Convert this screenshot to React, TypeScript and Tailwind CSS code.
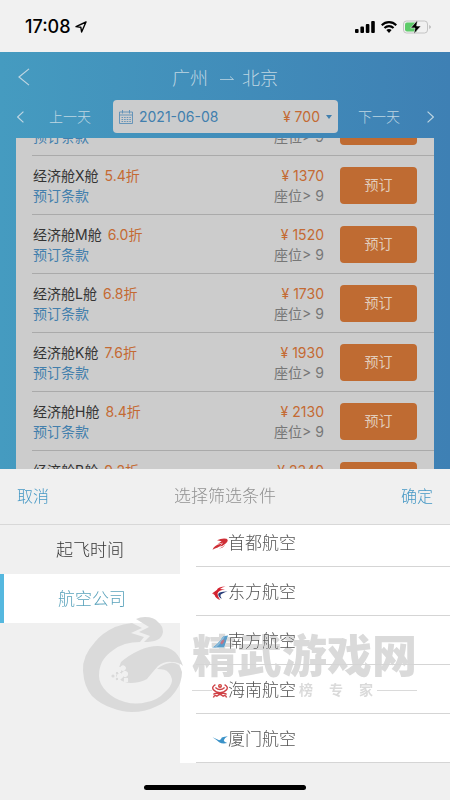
import React from "react";

interface Fare {
  cabin: string;
  discount: string;
  price: number;
}

interface Airline {
  id: string;
  name: string;
  logo: React.ReactNode;
}

const fares: Fare[] = [
  { cabin: "V", discount: "5.0", price: 1270 },
  { cabin: "X", discount: "5.4", price: 1370 },
  { cabin: "M", discount: "6.0", price: 1520 },
  { cabin: "L", discount: "6.8", price: 1730 },
  { cabin: "K", discount: "7.6", price: 1930 },
  { cabin: "H", discount: "8.4", price: 2130 },
  { cabin: "B", discount: "9.2", price: 2340 },
];

const airlines: Airline[] = [
  {
    id: "jd",
    name: "首都航空",
    logo: (
      <g fill="#cf2f36">
        <path d="M5 4.2Q10 2 14.5 2.8Q17.4 4.4 13.4 7.8Q10.5 10.6 7.2 10.6Q10.6 8.4 10.8 6.8Q8 7 5.5 8.4Q8 6 9.6 5.2Q7.5 4.6 5 4.2Z" />
        <path d="M0.5 13.8Q2.5 9.2 8 8.1L10.4 7Q8.4 10.4 5.8 11.4Q2.8 12.2 0.5 13.8Z" />
        <path d="M6 12.6Q10 12.2 13 8.5Q11.5 12.6 6 12.6Z" />
      </g>
    ),
  },
  {
    id: "mu",
    name: "东方航空",
    logo: (
      <>
        <path fill="#d3222f" d="M13.5 1.4Q6 1.5 4.8 5L0 8.4L3.6 8.9Q4 12 7.8 14.4Q5.5 11.6 5.5 8.6Q6.5 5 13 4.6Q9.5 4 8 4Q10 2 13.5 1.4Z" />
        <path fill="#d3222f" d="M0.5 8.5L4.5 8.5Q4.6 12 8.4 15Q3.6 13.6 2.6 10Z" />
        <path fill="#273c78" d="M15.5 6.4Q7 6.2 6.2 9Q6.2 12.2 9.8 13.8Q7.8 11.2 8.6 9.8Q10 8 15.5 6.4Z" />
      </>
    ),
  },
  {
    id: "cz",
    name: "南方航空",
    logo: (
      <>
        <path fill="#5b9dca" d="M0 13.5Q6 10.5 11 2.2L16 1.6L12.2 13.5Z" />
        <path fill="#8fbbd8" d="M6 9.5L11.2 2.2L13 2Q10 9 4 13.5L2 13.5Z" />
        <path fill="#c07486" d="M8.3 9Q9.3 5.8 12.3 5.2Q12.6 8.6 9.6 10.6Z" />
      </>
    ),
  },
  {
    id: "hu",
    name: "海南航空",
    logo: (
      <>
        <path fill="none" stroke="#cf4045" strokeWidth="1.4" d="M3.4 1.6Q-0.6 4 1.4 6.8Q4 9.6 8 9.6Q12 9.6 14.6 6.8Q16.6 4 12.6 1.6M3.4 4.4Q8 8.8 12.6 4.4M1.4 14.4Q2.6 11.4 5 13.2Q7.8 12 8 9.6Q8.2 12 11 13.2Q13.4 11.4 14.6 14.4M1.4 11.4Q5 9 8 11.6Q11 9 14.6 11.4" />
        <circle cx="8" cy="3" r="2" fill="#cf4045" />
        <circle cx="8" cy="2.8" r="0.7" fill="#f7d38b" />
      </>
    ),
  },
  {
    id: "mf",
    name: "厦门航空",
    logo: (
      <path fill="#3b92c8" d="M0.5 5.2Q4 6.6 7.2 8.2Q9.2 7.6 9.8 5.6Q12.5 4.4 15.8 4.2Q12.5 5.6 11.8 8.2Q11.7 9.6 15.2 11Q10.5 12.2 7.2 10.2Q4.8 8 0.5 5.2Z" />
    ),
  },
];

const StatusBar: React.FC = () => (
  <div className="flex h-[52px] shrink-0 items-center justify-between bg-[#f1f1f1] pl-[25px] pr-[19px] pt-0.5 text-black">
    <div className="flex items-center gap-1">
      <span className="font-[Inter,sans-serif] text-lg font-medium leading-5">17:08</span>
      <svg className="size-3" viewBox="0 0 12 12" fill="none" stroke="currentColor" strokeWidth="1.4" strokeLinejoin="round">
        <path d="M11 1L1 5.6L5.8 6.2L6.6 11Z" />
      </svg>
    </div>
    <div className="flex items-center gap-1.5">
      <svg className="h-3 w-5" viewBox="0 0 20 12">
        <rect x="0" y="8" width="3.6" height="4" rx="1" />
        <rect x="5.4" y="5.6" width="3.6" height="6.4" rx="1" />
        <rect x="10.8" y="3" width="3.6" height="9" rx="1" />
        <rect x="16.2" y="0" width="3.6" height="12" rx="1" />
      </svg>
      <svg className="h-3 w-4" viewBox="0 0 16 12">
        <path d="M8 0Q12.6 0 16 3.4L14.5 5Q11.8 2.3 8 2.3Q4.2 2.3 1.5 5L0 3.4Q3.4 0 8 0Z" />
        <path d="M8 4Q11 4 13.3 6.2L11.8 7.8Q10.2 6.2 8 6.2Q5.8 6.2 4.2 7.8L2.7 6.2Q5 4 8 4Z" />
        <path d="M8 8Q9.5 8 10.6 9.1L8 12L5.4 9.1Q6.5 8 8 8Z" />
      </svg>
      <svg className="h-3.5 w-7" viewBox="0 0 28 14">
        <rect x="0.5" y="1" width="24" height="12" rx="3" fill="none" stroke="#c4c4c4" />
        <path fill="#5dcb69" d="M4 2.5H14V11.5H4Q2 11.5 2 9.5V4.5Q2 2.5 4 2.5Z" />
        <path fill="#b0b0b0" d="M26.3 5Q27.8 6 27.8 7T26.3 9Z" />
        <path fill="#000" stroke="#f1f1f1" strokeWidth="0.6" d="M14.6 0L7.6 8H12L10.8 14L18 6H13.6Z" />
      </svg>
    </div>
  </div>
);

const Chevron: React.FC<{ className: string; right?: boolean }> = ({ className, right }) => (
  <svg className={className} viewBox="0 0 12 20" fill="none" stroke="#bfd6e2" strokeWidth="1.2" preserveAspectRatio="none">
    <path vectorEffect="non-scaling-stroke" d={right ? "M1 1L11 10L1 19" : "M11 1L1 10L11 19"} />
  </svg>
);

const FlightHeader: React.FC = () => (
  <header className="shrink-0 text-[#bfd6e2]">
    <div className="relative flex h-12 items-center justify-center pt-1.5 text-lg">
      <button type="button" aria-label="返回" className="absolute left-[18px] top-4">
        <Chevron className="h-[18px] w-3" />
      </button>
      <span>广州</span>
      <svg className="ml-3 mr-2 h-2 w-3.5" viewBox="0 0 14 8" fill="none" stroke="currentColor" strokeWidth="0.8">
        <path d="M0 4.5H13.5L10 1.5" />
      </svg>
      <span>北京</span>
    </div>
    <div className="flex h-[33px] items-center text-sm">
      <button type="button" className="flex flex-1 items-center gap-[25px] pl-[17px]">
        <Chevron className="h-3 w-[7px]" />
        上一天
      </button>
      <button
        type="button"
        className="flex h-full w-1/2 items-center rounded bg-[#cbcccd] px-1.5 font-[Inter,'Noto_Sans_CJK_SC',sans-serif] font-normal text-[#417fae]"
      >
        <svg className="mr-1.5 size-3.5" viewBox="0 0 14 14" fill="none" stroke="#5b8fb7" strokeWidth="0.9">
          <path d="M0.5 2H13.5V13.5H0.5ZM0.5 5H13.5M3.5 0V3.5M10.5 0V3.5" />
          <path strokeDasharray="1.6 1" d="M2.5 7.5H12M2.5 9.5H12M2.5 11.5H12" />
        </svg>
        <span>2021-06-08</span>
        <span className="ml-auto text-[#c46a33]">¥ 700</span>
        <svg className="ml-1.5 h-1 w-1.5" viewBox="0 0 6 4" fill="#417fae">
          <path d="M0 0H6L3 4Z" />
        </svg>
      </button>
      <button type="button" className="flex flex-1 items-center justify-end gap-[27px] pr-4">
        下一天
        <Chevron className="h-3 w-[7px]" right />
      </button>
    </div>
  </header>
);

const FareRow: React.FC<{ fare: Fare }> = ({ fare }) => (
  <li className="ml-4 flex h-[59px] shrink-0 items-center border-b border-[#aaaaaa] pl-px pr-[17px] pt-px text-sm font-normal leading-5">
    <div className="flex-1">
      <div className="flex gap-1.5 text-[#333333]">
        <span>经济舱{fare.cabin}舱</span>
        <span className="text-[#c46a33]">{fare.discount}折</span>
      </div>
      <a href="#terms" className="block text-[#437fac]">
        预订条款
      </a>
    </div>
    <div className="mr-4 flex flex-col items-end">
      <div className="flex gap-1 text-[#c46a33]">
        <span>¥</span>
        <span>{fare.price}</span>
      </div>
      <div className="text-[#777777]">座位&gt; 9</div>
    </div>
    <button type="button" className="h-[37px] w-[77px] rounded bg-[#bf6b32] pb-0.5 text-[#e2cdbb]">
      预订
    </button>
  </li>
);

const Watermark: React.FC = () => (
  <div
    aria-hidden="true"
    className="pointer-events-none absolute left-[82px] top-[147px] flex gap-2 text-[#dadada] mix-blend-darken"
  >
    <svg className="h-[98px] w-[102px]" viewBox="0 0 102 98" fill="currentColor">
      <path d="M50 7Q41 8 33 11Q20 17 13 26Q0 40 1 55Q2 71 10 80Q18 88 30 92Q40 96 50 96Q63 96 73 91Q86 86 93 76Q100 67 100 56Q99 52 97 49Q92 46 88 47Q81 48 75 53Q84 53 86 56Q90 60 90 65Q89 71 83 76Q76 84 65 86Q54 89 43 86Q32 83 25 76Q17 68 17 60Q17 52 20 46Q24 39 30 35Q36 30 43 28Q50 26 58 26L62 21L49 17L60 12Z" />
      <path d="M54 3Q58 1 63 1Q72 1 76 6Q81 10 81 16Q80 22 75 24Q70 26 62 26L68 20L57 16L67 11Z" />
      <path d="M101 50Q98 41 93 36Q86 30 76 30Q67 30 58 34Q47 39 39 46L34 60Q40 67 48 67Q58 67 65 63Q69 58 76 50Q83 45 90 46Q97 46 101 50Z" />
      <g fill="#fff">
        <circle cx="36" cy="54" r="3" />
        <circle cx="41" cy="52" r="2.6" />
        <circle cx="38" cy="60" r="2.8" />
        <circle cx="43" cy="58" r="2.8" />
        <circle cx="44" cy="64" r="2.2" />
        <circle cx="37" cy="65" r="2" />
      </g>
      <circle cx="31" cy="60" r="1.6" />
      <circle cx="35" cy="57" r="1.2" />
      <circle cx="35" cy="63" r="1.2" />
    </svg>
    <div className="pt-5">
      <div className="text-[45px] font-black leading-[44px]">精武游戏网</div>
      <div className="flex items-center gap-1 text-sm font-bold leading-5">
        <span className="mr-auto h-px w-5 bg-current" />
        <span className="flex gap-4">
          <span>榜</span>
          <span>专</span>
          <span>家</span>
        </span>
        <span className="h-px w-10 bg-current" />
      </div>
    </div>
  </div>
);

const FilterSheet: React.FC = () => (
  <section className="relative isolate shrink-0 bg-[#f0f0f0]">
    <div className="flex h-14 items-center justify-between border-b border-[#d8d8d8] px-[17px] text-base">
      <button type="button" className="text-[#4497c4]">
        取消
      </button>
      <h2 className="text-[17px] text-[#919191]">选择筛选条件</h2>
      <button type="button" className="text-[#4497c4]">
        确定
      </button>
    </div>
    <div className="flex text-[17px]">
      <div className="w-2/5">
        <button type="button" className="block h-[49px] w-full pt-0.5 text-[#333333]">
          起飞时间
        </button>
        <button type="button" className="block h-[49px] w-full border-l-4 border-[#55b8df] bg-white pt-0.5 text-[#5ba3bc]">
          航空公司
        </button>
      </div>
      <ul className="flex h-[238px] flex-1 flex-col justify-end overflow-hidden bg-white pl-4">
        {airlines.map((airline) => (
          <li key={airline.id} className="h-[49px] shrink-0 border-b border-[#d5d5d5]">
            <button type="button" className="flex h-full w-full items-center pl-4 pt-1 text-[#555555]">
              <svg className="size-4 shrink-0" viewBox="0 0 16 16">
                {airline.logo}
              </svg>
              {airline.name}
            </button>
          </li>
        ))}
      </ul>
    </div>
    <div className="flex h-[37px] items-center justify-center pt-3">
      <div className="h-[5px] w-[162px] rounded-full bg-black" />
    </div>
    <Watermark />
  </section>
);

const App: React.FC = () => {
  return (
    <div className="flex h-screen flex-col overflow-hidden font-['Liberation_Sans','Noto_Sans_CJK_SC',sans-serif] font-light">
      <StatusBar />
      <main className="flex min-h-0 flex-1 flex-col bg-linear-to-r from-[#459bc0] to-[#3e80b4]">
        <FlightHeader />
        <div className="mx-4 mt-[5px] min-h-0 flex-1 overflow-hidden bg-[#cccccc]">
          <ul className="-mt-[41px] font-[Inter,'Noto_Sans_CJK_SC',sans-serif]">
            {fares.map((fare) => (
              <FareRow key={fare.cabin} fare={fare} />
            ))}
          </ul>
        </div>
      </main>
      <FilterSheet />
    </div>
  );
};

export default App;
